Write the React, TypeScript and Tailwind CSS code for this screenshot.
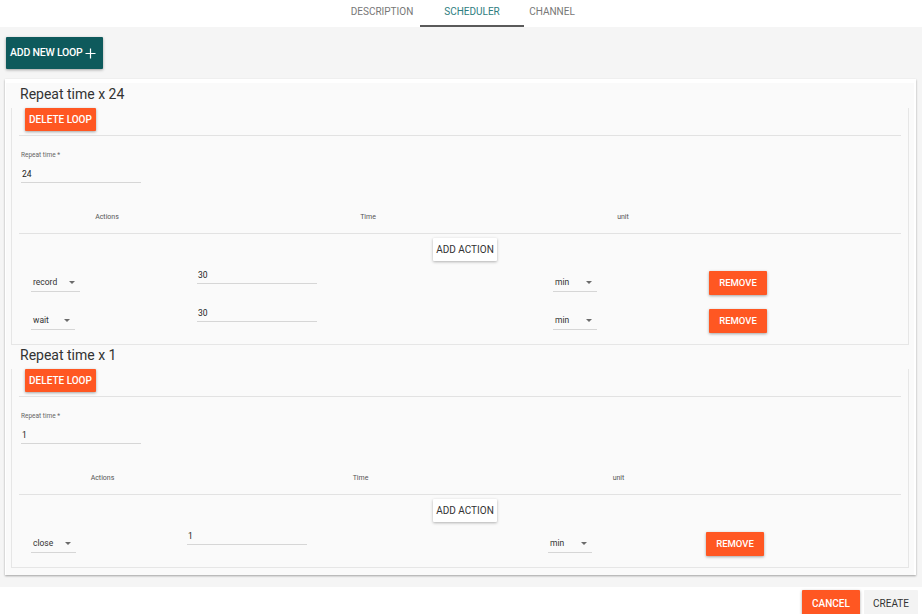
import React from "react";

function Caret() {
  return (
    <svg width="6" height="3" viewBox="0 0 6 3" className="shrink-0">
      <path d="M0 0h6L3 3z" fill="#6b6b6b" />
    </svg>
  );
}

function Select({ value }: { value: string }) {
  return (
    <div className="flex w-fit min-w-[44px] items-center justify-between gap-[12px] pl-[2px] pr-[5px] pb-[3px] border-b border-[#d6d6d6]">
      <span className="text-[8.5px] leading-[12px] text-[#333]">{value}</span>
      <Caret />
    </div>
  );
}

function TimeInput({ value }: { value: string }) {
  return (
    <div className="w-[120px] pl-[1px] pb-[2px] border-b border-[#d6d6d6] text-[8.5px] leading-[12px] text-[#222]">
      {value}
    </div>
  );
}

function OrangeButton({ label, className }: { label: string; className: string }) {
  return (
    <div
      className={
        "flex items-center justify-center bg-[#ff5722] text-white font-medium rounded-[1px] shadow-[0_1px_3px_rgba(0,0,0,0.35)] " +
        className
      }
    >
      {label}
    </div>
  );
}

type Row = { action: string; time: string };

function Loop({
  count,
  rows,
  cols,
  pads,
}: {
  count: string;
  rows: Row[];
  cols: string;
  pads: [string, string, string, string];
}) {
  return (
    <div>
      <div className="h-[26px] pl-[9px] text-[14px] leading-[20px] text-[#333]">Repeat time x {count}</div>
      <div className="border-l border-r border-b border-[#e6e6e6] px-[7px] pb-[2px] bg-[#fafafa]">
        <OrangeButton label="DELETE LOOP" className="relative -mt-[2px] ml-[6px] w-[71px] h-[23px] text-[10px]" />
        <div className="mt-[4px] border-t border-[#e2e2e2]" />
        <div className="mt-[14px] ml-[2px] h-[10px] text-[6.5px] leading-[10px] text-[#666]">Repeat time *</div>
        <div className="mt-[8px] ml-[2px]">
          <TimeInput value={count} />
        </div>
        <div className={"grid mt-[29px] h-[10px] text-[7px] leading-[10px] text-[#555] " + cols}>
          <div className="text-center">Actions</div>
          <div className="text-center">Time</div>
          <div className="text-center">unit</div>
          <div />
        </div>
        <div className="mt-[11px] border-t border-[#e2e2e2]" />
        <div className="mt-[4px] flex justify-center pl-[10px]">
          <div className="w-[64px] h-[23px] flex items-center justify-center bg-white text-[10px] text-[#333] rounded-[1px] shadow-[0_1px_3px_rgba(0,0,0,0.3)]">
            ADD ACTION
          </div>
        </div>
        <div className="mt-[5px]">
          {rows.map((r, i) => (
            <div key={i} className={"grid h-[38px] items-start " + cols}>
              <div className={"pt-[10px] " + pads[0]}>
                <Select value={r.action} />
              </div>
              <div className={"pt-[3px] " + pads[1]}>
                <TimeInput value={r.time} />
              </div>
              <div className={"pt-[10px] " + pads[2]}>
                <Select value="min" />
              </div>
              <div className={"pt-[5px] " + pads[3]}>
                <OrangeButton label="REMOVE" className="w-[58px] h-[24px] text-[9.5px]" />
              </div>
            </div>
          ))}
        </div>
      </div>
    </div>
  );
}

export default function App() {
  return (
    <div className="w-[922px] h-[614px] overflow-hidden bg-white font-['Roboto',sans-serif]">
      <div className="h-[27px] bg-white flex justify-center pl-[2px]">
        <div className="w-[76px] flex items-center justify-center pb-[5px] text-[10px] text-[#777]">DESCRIPTION</div>
        <div className="w-[104px] flex items-center justify-center pb-[3px] text-[10px] text-[#2e7d80] border-b-2 border-[#5a5a5a]">
          SCHEDULER
        </div>
        <div className="w-[56px] flex items-center justify-center pb-[5px] text-[10px] text-[#777]">CHANNEL</div>
      </div>
      <div className="bg-[#f5f5f5] pt-[10px] pb-[12px]">
        <div className="ml-[6px] w-[97px] h-[32px] flex items-center pl-[4px] gap-[2px] bg-[#0e5a5c] text-white text-[10.5px] font-medium tracking-[-0.2px] rounded-[1px] shadow-[0_1px_3px_rgba(0,0,0,0.35)]">
          <span>ADD NEW LOOP</span>
          <svg width="11" height="11" viewBox="0 0 11 11">
            <path d="M5.5 0.5v10M0.5 5.5h10" stroke="white" strokeWidth="1.2" />
          </svg>
        </div>
        <div className="mt-[10px] ml-[5px] w-[911px] bg-[#fafafa] border-t-[4px] border-l border-r-[2px] border-white px-[5px] pt-[1px] pb-[7px] shadow-[0_1px_2px_rgba(0,0,0,0.35)]">
          <Loop
            count="24"
            rows={[
              { action: "record", time: "30" },
              { action: "wait", time: "30" },
            ]}
            cols="grid-cols-[176px_346px_164px_1fr]"
            pads={["pl-3", "pl-[2px]", "pl-3", "pl-1"]}
          />
          <Loop
            count="1"
            rows={[{ action: "close", time: "1" }]}
            cols="grid-cols-[167px_349px_167px_1fr]"
            pads={["pl-3", "pl-[1px]", "pl-[13px]", "pl-1"]}
          />
        </div>
      </div>
      <div className="flex justify-end gap-[4px] pr-[4px] pt-[3px]">
        <OrangeButton label="CANCEL" className="w-[58px] h-[26px] text-[10px]" />
        <div className="w-[54px] h-[26px] flex items-center justify-center bg-[#f3f3f3] text-[10px] text-[#333] rounded-[1px]">
          CREATE
        </div>
      </div>
    </div>
  );
}
